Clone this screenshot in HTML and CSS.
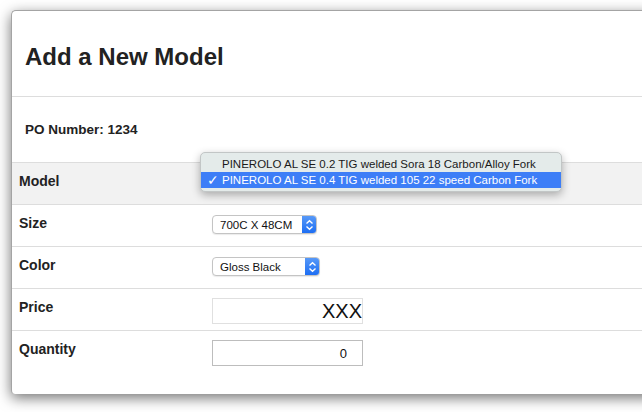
FILE: index.html
```html
<!DOCTYPE html>
<html lang="en">
<head>
    <meta charset="UTF-8">
    <meta name="viewport" content="width=device-width, initial-scale=1.0">
    <title>Add a New Model</title>
    <link rel="stylesheet" href="styles.css">
</head>
<body>
    <div class="modal">
        <div class="modal-header">
            <h1>Add a New Model</h1>
        </div>
        <div class="po-line">PO Number: 1234</div>

        <table class="model-table">
            <tr class="row-active">
                <td class="label">Model</td>
                <td class="value"></td>
            </tr>
            <tr>
                <td class="label">Size</td>
                <td class="value">
                    <div class="select size-select"><span>700C X 48CM</span><i class="arrows"><svg width="9" height="12" viewBox="0 0 9 12"><path d="M1.5 4.5 L4.5 1.8 L7.5 4.5 M1.5 7.5 L4.5 10.2 L7.5 7.5" fill="none" stroke="#fff" stroke-width="1.4"/></svg></i></div>
                </td>
            </tr>
            <tr>
                <td class="label">Color</td>
                <td class="value">
                    <div class="select color-select"><span>Gloss Black</span><i class="arrows"><svg width="9" height="12" viewBox="0 0 9 12"><path d="M1.5 4.5 L4.5 1.8 L7.5 4.5 M1.5 7.5 L4.5 10.2 L7.5 7.5" fill="none" stroke="#fff" stroke-width="1.4"/></svg></i></div>
                </td>
            </tr>
            <tr>
                <td class="label">Price</td>
                <td class="value"><input type="text" class="field price-field" value="XXX"></td>
            </tr>
            <tr class="last-row">
                <td class="label">Quantity</td>
                <td class="value"><input type="text" class="field qty-field" value="0"></td>
            </tr>
        </table>
    </div>

    <!-- open model dropdown -->
    <ul class="dropdown">
        <li>PINEROLO AL SE 0.2 TIG welded Sora 18 Carbon/Alloy Fork</li>
        <li class="selected"><span class="check">&#10003;</span>PINEROLO AL SE 0.4 TIG welded 105 22 speed Carbon Fork</li>
    </ul>
</body>
</html>
```

FILE: styles.css
```css
body {
    margin: 0;
    padding: 10px 0 0 11px;
    background: #fff;
    font-family: "Liberation Sans", Arial, sans-serif;
    color: #222;
    overflow: hidden;
    height: 412px;
    box-sizing: border-box;
}
.modal {
    width: 700px;
    height: 384px;
    box-sizing: border-box;
    background: #fff;
    border-top: 1px solid #a4a4a4;
    border-left: 1px solid #a4a4a4;
    border-radius: 5px 0 0 4px;
    box-shadow: 0 4px 14px rgba(0, 0, 0, 0.55);
}
.modal-header {
    height: 85px;
    padding-left: 13px;
    border-bottom: 1px solid #ddd;
    display: flex;
    align-items: center;
}
h1 {
    margin: 6px 0 0;
    font-size: 24px;
    font-weight: bold;
    color: #222;
}
.po-line {
    height: 65px;
    padding-left: 13px;
    box-sizing: border-box;
    padding-top: 25px;
    font-size: 13.5px;
    font-weight: bold;
    line-height: 16px;
}
.model-table {
    width: 100%;
    border-collapse: collapse;
    border-top: 1px solid #ddd;
}
.model-table td {
    height: 42px;
    padding: 0;
    vertical-align: top;
    border-bottom: 1px solid #ddd;
    box-sizing: border-box;
}
.model-table .last-row td {
    border-bottom: none;
}
.row-active td {
    background: #f2f2f2;
}
.label {
    width: 200px;
    padding-left: 7px !important;
    padding-top: 10px !important;
    font-size: 14px;
    font-weight: bold;
    line-height: 16px;
}
.value {
    padding-top: 9px !important;
}
.select {
    margin-top: 1px;
    height: 19px;
    box-sizing: border-box;
    border: 1px solid #c4c4c4;
    border-radius: 4px;
    background: #fff;
    display: flex;
    align-items: center;
    font-size: 11.5px;
    color: #111;
    overflow: hidden;
    box-shadow: 0 1px 1px rgba(0, 0, 0, 0.08);
}
.select span {
    flex: 1;
    padding-left: 7px;
}
.size-select {
    width: 105px;
}
.color-select {
    width: 108px;
}
.arrows {
    width: 15px;
    height: 19px;
    margin-right: -1px;
    background: linear-gradient(#5a9bf8, #1a6cf3);
    display: flex;
    align-items: center;
    justify-content: center;
    border-radius: 0 4px 4px 0;
}
.field {
    width: 151px;
    height: 26px;
    box-sizing: border-box;
    margin: 0;
    border: 1px solid #c8c8c8;
    font-family: "Liberation Sans", Arial, sans-serif;
    text-align: right;
    color: #111;
    outline: none;
}
.price-field {
    font-size: 20px;
    padding: 0 0 0 0;
    border-color: #e0e0e0;
}
.qty-field {
    font-size: 13px;
    padding: 0 15px 0 0;
    border-color: #bdbdbd;
}
.dropdown {
    position: absolute;
    left: 200px;
    top: 152px;
    width: 362px;
    margin: 0;
    padding: 3px 0 3px;
    box-sizing: border-box;
    list-style: none;
    background: #e4ebea;
    border: 1px solid #c2c6c6;
    border-radius: 5px;
    box-shadow: 0 3px 8px rgba(0, 0, 0, 0.3);
    font-size: 11.5px;
    color: #1a1a1a;
}
.dropdown li {
    height: 16px;
    line-height: 16px;
    padding-left: 21px;
    position: relative;
}
.dropdown .selected {
    background: #3d7ef7;
    color: #fff;
}
.check {
    position: absolute;
    left: 6px;
    top: 0;
    font-size: 14px;
}
```
